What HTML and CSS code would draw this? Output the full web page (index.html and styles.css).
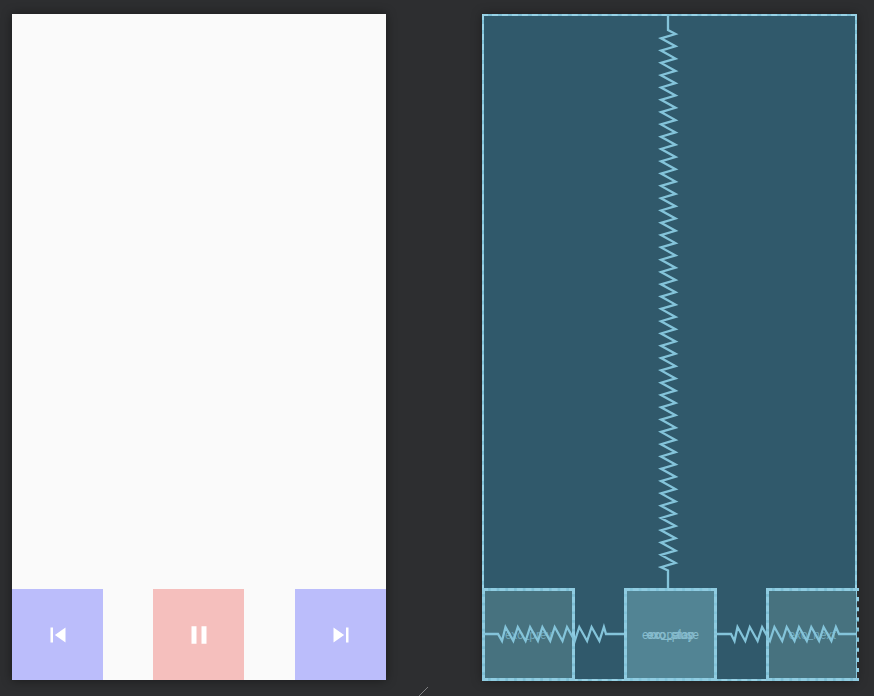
FILE: index.html
```html
<!DOCTYPE html>
<html>
<head>
<meta charset="UTF-8">
<title>Layout editor</title>
<link rel="stylesheet" href="styles.css">
</head>
<body>
<div class="editor">
  <!-- design surface -->
  <div class="phone">
    <div class="controls">
      <div class="btn btn-skip">
        <svg class="icon" viewBox="0 0 24 24"><path d="M6 6h2v12H6zm3.5 6l8.5 6V6z"/></svg>
      </div>
      <div class="btn btn-play">
        <svg class="icon" viewBox="0 0 24 24"><path d="M6 19h4V5H6v14zm8-14v14h4V5h-4z"/></svg>
      </div>
      <div class="btn btn-skip">
        <svg class="icon" viewBox="0 0 24 24"><path d="M6 18l8.5-6L6 6v12zM16 6v12h2V6h-2z"/></svg>
      </div>
    </div>
  </div>

  <!-- blueprint surface -->
  <div class="blueprint">
    <div class="bp-row">
      <div class="bp-box"><span class="bp-label">exo_prev</span></div>
      <div class="bp-box bp-box-main">
        <span class="bp-label">exo_stop</span>
        <span class="bp-label">exo_play</span>
        <span class="bp-label">exo_pause</span>
      </div>
      <div class="bp-box bp-box-end"><span class="bp-label">exo_next</span></div>
    </div>
    <svg class="springs" viewBox="482 14 377 668">
      <path d="M668 14V30L675.5 34
        l-14.5 4.3 14.5 8 -14.5 4.3 14.5 8 -14.5 4.3 14.5 8 -14.5 4.3 14.5 8 -14.5 4.3 14.5 8 -14.5 4.3 14.5 8 -14.5 4.3 14.5 8 -14.5 4.3 14.5 8 -14.5 4.3 14.5 8 -14.5 4.3 14.5 8
        l-14.5 4.3 14.5 8 -14.5 4.3 14.5 8 -14.5 4.3 14.5 8 -14.5 4.3 14.5 8 -14.5 4.3 14.5 8 -14.5 4.3 14.5 8 -14.5 4.3 14.5 8 -14.5 4.3 14.5 8 -14.5 4.3 14.5 8 -14.5 4.3 14.5 8
        l-14.5 4.3 14.5 8 -14.5 4.3 14.5 8 -14.5 4.3 14.5 8 -14.5 4.3 14.5 8 -14.5 4.3 14.5 8 -14.5 4.3 14.5 8 -14.5 4.3 14.5 8 -14.5 4.3 14.5 8 -14.5 4.3 14.5 8 -14.5 4.3 14.5 8
        l-14.5 4.3 14.5 8 -14.5 4.3 14.5 8 -14.5 4.3 14.5 8 -14.5 4.3 14.5 8 -14.5 4.3 14.5 8 -14.5 4.3 14.5 8 -14.5 4.3 14.5 8 -14.5 4.3 14.5 8 -14.5 4.3 14.5 8 -14.5 4.3 14.5 8
        l-14.5 4.3 14.5 8 -14.5 4.3 14.5 8 -14.5 4.3 14.5 8
        l-14.5 4.3 L668 570.5V588"/>
      <path d="M482 634H498L502 641l3.5-14 7.8 14 4.5-14 7.8 14 4.5-14 7.8 14 4.5-14 7.8 14 4.5-14 7.8 14 4.5-14 7.8 14 4.5-14 7.8 14 4.5-14 7.8 14 4.5-14L606 634H624"/>
      <path d="M714 634H731L734.5 641l3-14 7.8 14 4.5-14 7.8 14 4.5-14 7.8 14 4.5-14 7.8 14 4.5-14 7.8 14 4.5-14 7.8 14 4.5-14 7.8 14 4.5-14 7.8 14 4.5-14L839 634H857"/>
    </svg>
  </div>
</div>
<svg class="resize-mark" viewBox="0 0 10 10"><path d="M0 10L10 0"/></svg>
</body>
</html>
```

FILE: styles.css
```css
html, body {
  margin: 0;
  height: 100%;
  overflow: hidden;
  background: #2d2e30;
  font-family: "Roboto", sans-serif;
}

.editor {
  display: flex;
  align-items: flex-start;
  gap: 96px;
  padding: 14px 0 0 12px;
}

/* design surface */
.phone {
  display: flex;
  flex-direction: column;
  justify-content: flex-end;
  flex: none;
  width: 374px;
  height: 666px;
  background: #fafafa;
  box-shadow: 0 0 10px rgba(0, 0, 0, .45);
}
.controls {
  display: flex;
  justify-content: space-between;
}
.btn {
  display: flex;
  align-items: center;
  justify-content: center;
  width: 91px;
  height: 91px;
}
.btn-skip {
  background: #bbbdfb;
}
.btn-play {
  margin-left: -1px;
  background: #f5bfbd;
}
.icon {
  width: 30px;
  height: 30px;
  fill: #fff;
}

/* blueprint surface */
.blueprint {
  position: relative;
  display: flex;
  flex-direction: column;
  justify-content: flex-end;
  flex: none;
  width: 375px;
  height: 667px;
  background: #30596b;
  box-shadow: 0 0 10px rgba(0, 0, 0, .35);
}
.blueprint::before,
.blueprint::after {
  content: "";
  position: absolute;
  inset: 0;
  border: 2px solid #7fc1d7;
}
.blueprint::after {
  border: 2px dashed #98d2e6;
}
.bp-row {
  position: relative;
  z-index: 1;
  display: flex;
  justify-content: space-between;
  margin-right: -2px;
}
.bp-box {
  position: relative;
  display: grid;
  place-items: center;
  box-sizing: border-box;
  width: 93px;
  height: 93px;
  border: 3px dashed #8fcce1;
  background: linear-gradient(#47727f, #47727f) padding-box, #7dbfd5 border-box;
}
.bp-box-main {
  background: linear-gradient(#528494, #528494) padding-box, #82c4da border-box;
}
.bp-box-end::after {
  content: "";
  position: absolute;
  top: 0;
  bottom: 0;
  right: -3px;
  border-right: 2px dashed #2d2e30;
}
.bp-label {
  grid-area: 1 / 1;
  font-size: 12px;
  line-height: 1;
  color: #6fa6b9;
  white-space: nowrap;
}
.bp-box-main .bp-label {
  color: #86bccd;
}
.springs {
  position: absolute;
  z-index: 2;
  left: 0;
  top: 0;
  width: 377px;
  height: 668px;
  fill: none;
  stroke: #84c4da;
  stroke-width: 2.3;
  pointer-events: none;
}

.resize-mark {
  position: absolute;
  left: 418px;
  top: 687px;
  width: 10px;
  height: 10px;
  fill: none;
  stroke: #7e7f81;
  stroke-width: 1;
}
```
